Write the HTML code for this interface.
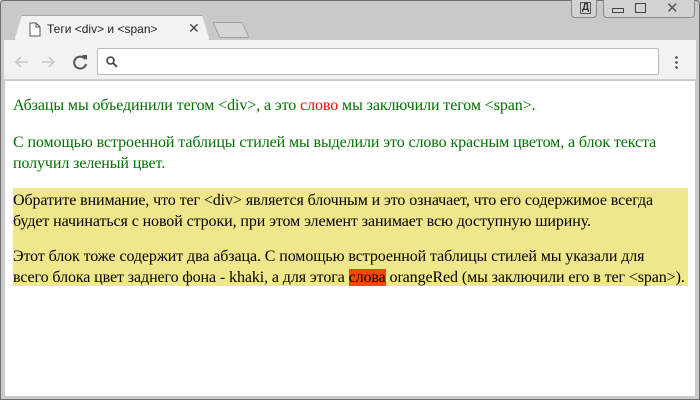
<!DOCTYPE html>
<html><head><meta charset="utf-8"><style>
*{margin:0;padding:0;box-sizing:border-box}
body{width:700px;height:400px;overflow:hidden;background:#c9c9c9;position:relative;font-family:"Liberation Serif",serif}
.frame{position:absolute;left:0;top:0;width:700px;height:400px;border:1px solid #6e6e6e;border-radius:4px 4px 0 0}
.toolbar{position:absolute;left:4px;top:40px;width:692px;height:40px;background:#f2f2f2;border-bottom:1px solid #d0d0d0}
.tab{position:absolute;left:14px;top:15px;width:196px;height:26px;background:#f2f2f2;border:1px solid #a9a9a9;border-bottom:none;border-radius:4px 4px 0 0;clip-path:polygon(0 100%,8px 0,188px 0,100% 100%)}
.tabt{position:absolute;left:47px;top:22px;font:12px "Liberation Sans",sans-serif;color:#222}
.newtab{position:absolute;left:216px;top:22px;width:30px;height:16px;border:1px solid #a0a0a0;background:#d6d6d6;transform:skewX(25deg);border-radius:2px}
.url{position:absolute;left:97px;top:48px;width:562px;height:27px;background:#fff;border:1px solid #b9b9b9;border-radius:2px}
.content{position:absolute;left:5px;top:81px;width:690px;height:315px;background:#fff}
p{font-size:16px;line-height:21px;margin:0;letter-spacing:-0.1px}
.wb{position:absolute;top:0;height:18px;border:1px solid #8a8a8a;border-top:none;background:#d2d2d2;border-radius:0 0 4px 4px}
</style></head><body>
<div class="frame"></div>
<div class="wb" style="left:571px;width:26px"></div>
<div class="wb" style="left:603px;width:92px"></div>
<div style="position:absolute;left:580px;top:2px;font:bold 10px 'Liberation Sans',sans-serif;color:#333;border:1px solid #555;padding:0 1px;line-height:10px">Д</div>
<div style="position:absolute;left:612px;top:8px;width:12px;height:5px;border:1px solid #444"></div>
<div style="position:absolute;left:635px;top:3px;width:11px;height:10px;border:1px solid #444"></div>
<div style="position:absolute;left:666px;top:-1px;font:15px 'Liberation Sans',sans-serif;color:#555">✕</div>
<div class="tab"></div>
<div class="toolbar"></div>
<div style="position:absolute;left:14px;top:40px;width:196px;height:2px;background:#f2f2f2"></div>
<svg style="position:absolute;left:29px;top:22px" width="12" height="15"><path d="M1 1h6l4 4v9H1z M7 1v4h4" fill="#fff" stroke="#555"/></svg>
<div class="tabt">Теги &lt;div&gt; и &lt;span&gt;</div>
<div style="position:absolute;left:188px;top:20px;font:14px 'Liberation Sans',sans-serif;color:#444">✕</div>
<div class="newtab"></div>
<svg style="position:absolute;left:12px;top:52px" width="80" height="20"><g stroke="#c8c8c8" stroke-width="1.6" fill="none"><path d="M16 10H4M9 5L4 10l5 5"/><path d="M30 10h12M37 5l5 5-5 5"/></g><path d="M73 7a6 6 0 1 0 1 5" stroke="#555" stroke-width="2" fill="none"/><path d="M70 3h5v5z" fill="#555"/></svg>
<div class="url"></div>
<svg style="position:absolute;left:105px;top:55px" width="14" height="14"><circle cx="5.5" cy="5.5" r="3.5" stroke="#444" stroke-width="1.6" fill="none"/><path d="M8 8l4 4" stroke="#444" stroke-width="1.8"/></svg>
<div style="position:absolute;left:675px;top:55px;width:3px;height:14px;background:radial-gradient(circle,#555 1.2px,transparent 1.5px) 0 0/3px 5px"></div>
<div class="content">
<div style="position:absolute;left:8px;top:14px;width:670px;color:#007000">
<p>Абзацы мы объединили тегом &lt;div&gt;, а это <span style="color:red">слово</span> мы заключили тегом &lt;span&gt;.</p>
<p style="margin-top:16px">С помощью встроенной таблицы стилей мы выделили это слово красным цветом, а блок текста получил зеленый цвет.</p>
</div>
<div style="position:absolute;left:8px;top:107px;width:675px;height:98px;background:khaki;color:#000">
<p style="padding-top:2px">Обратите внимание, что тег &lt;div&gt; является блочным и это означает, что его содержимое всегда будет начинаться с новой строки, при этом элемент занимает всю доступную ширину.</p>
<p style="margin-top:14px">Этот блок тоже содержит два абзаца. С помощью встроенной таблицы стилей мы указали для<br>всего блока цвет заднего фона - khaki, а для этога <span style="background:orangered">слова</span> orangeRed (мы заключили его в тег &lt;span&gt;).</p>
</div>
</div>
</body></html>
